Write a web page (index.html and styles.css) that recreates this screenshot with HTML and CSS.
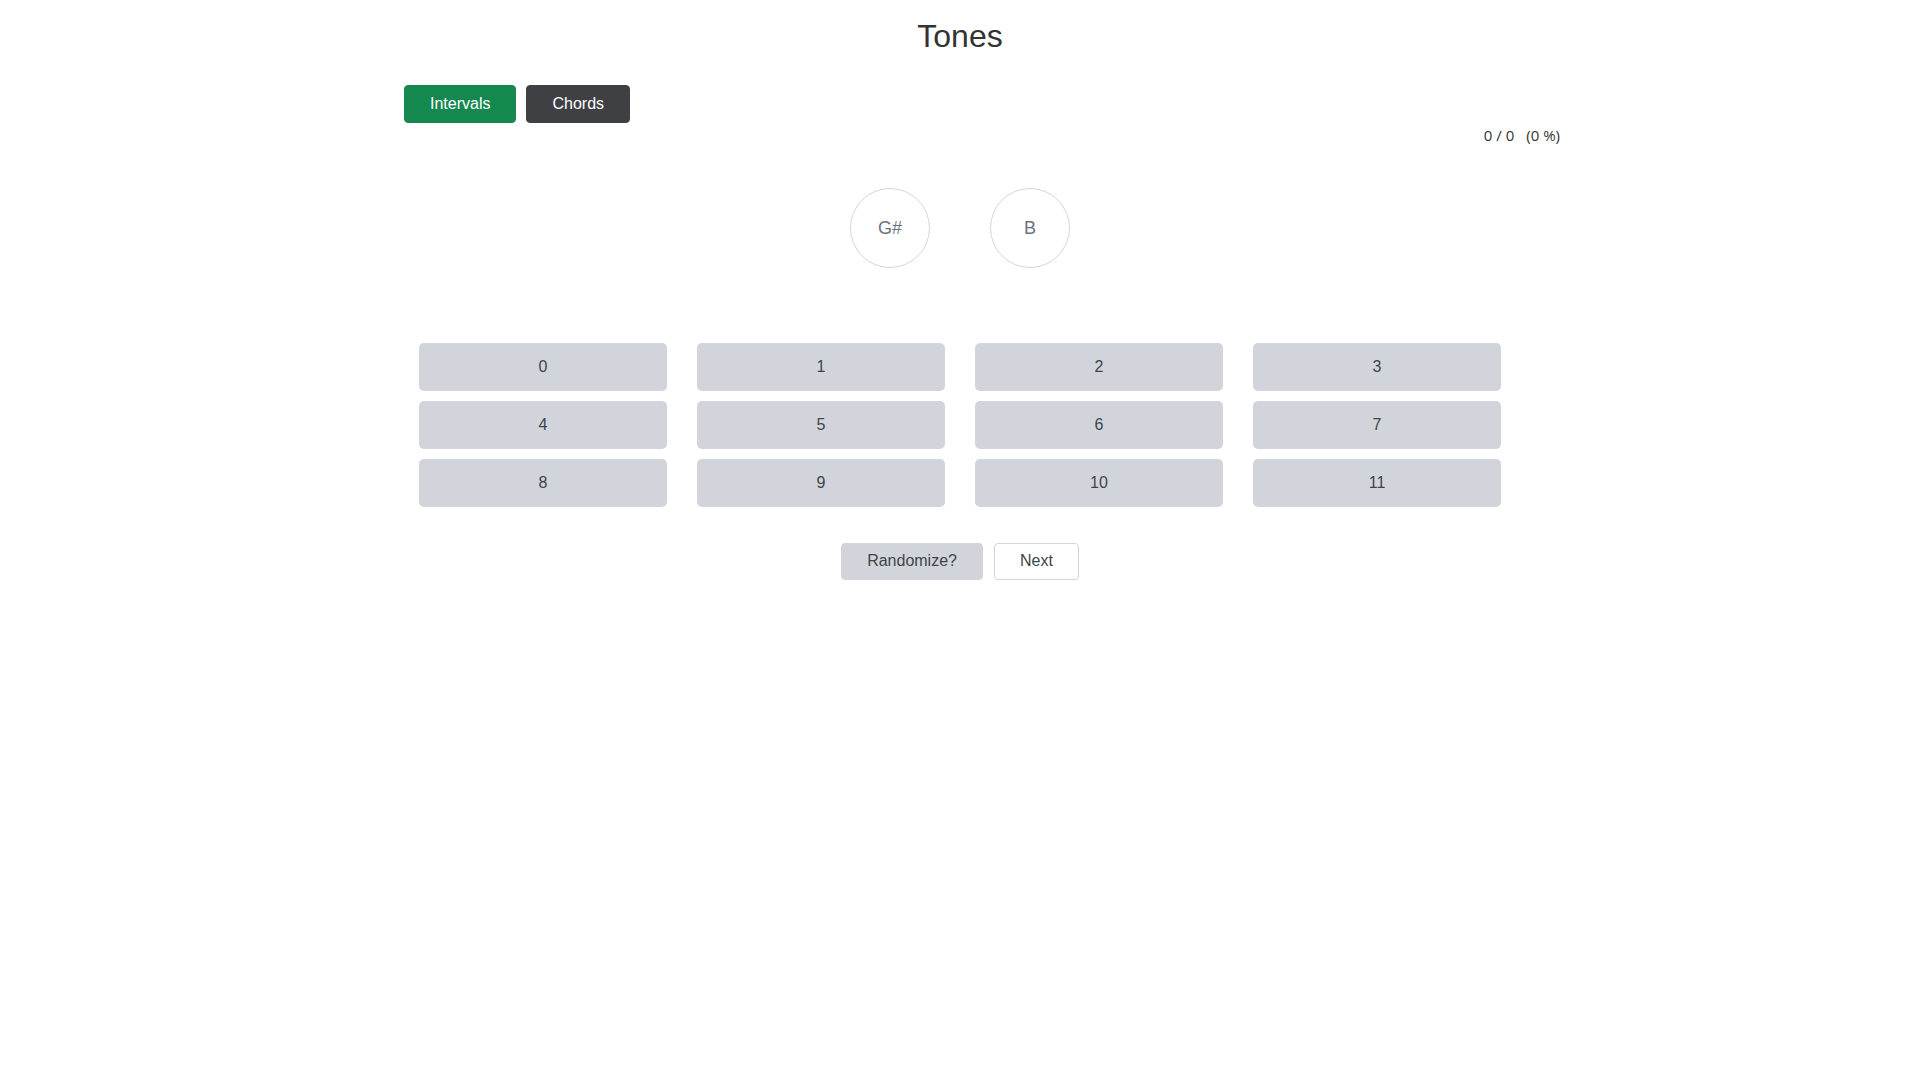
FILE: index.html
```html
<!DOCTYPE html>
<html lang="en">
<head>
<meta charset="utf-8">
<title>Tones</title>
<link rel="stylesheet" href="styles.css">
</head>
<body>
<div class="container">
  <h1 class="title">Tones</h1>
  <div class="mode-row">
    <button class="btn btn-green">Intervals</button>
    <button class="btn btn-dark">Chords</button>
  </div>
  <div class="score">
    <span>0 / 0</span>
    <span>(0 %)</span>
  </div>
  <div class="notes">
    <div class="note">G#</div>
    <div class="note">B</div>
  </div>
  <div class="answers">
    <button class="answer">0</button>
    <button class="answer">1</button>
    <button class="answer">2</button>
    <button class="answer">3</button>
    <button class="answer">4</button>
    <button class="answer">5</button>
    <button class="answer">6</button>
    <button class="answer">7</button>
    <button class="answer">8</button>
    <button class="answer">9</button>
    <button class="answer">10</button>
    <button class="answer">11</button>
  </div>
  <div class="actions">
    <button class="btn btn-gray">Randomize?</button>
    <button class="btn btn-white">Next</button>
  </div>
</div>
</body>
</html>
```

FILE: styles.css
```css
* {
  box-sizing: border-box;
}

html, body {
  margin: 0;
  padding: 0;
  background: #ffffff;
}

body {
  font-family: "Liberation Sans", Arial, sans-serif;
  font-size: 16px;
  color: #333333;
}

.container {
  width: 1200px;
  margin: 0 auto;
}

.title {
  margin: 18px 0 0;
  font-size: 32px;
  line-height: 36px;
  font-weight: 400;
  text-align: center;
  color: #333333;
}

.mode-row {
  display: flex;
  gap: 10px;
  margin-top: 31px;
  padding-left: 44px;
}

.btn {
  font-family: "Liberation Sans", Arial, sans-serif;
  font-size: 16px;
  line-height: 24px;
  padding: 6px 25px;
  border: 1px solid transparent;
  border-radius: 4px;
  cursor: pointer;
  margin: 0;
}

.btn-green {
  background: #15884f;
  border-color: #15884f;
  color: #ffffff;
}

.btn-dark {
  background: #3f4044;
  border-color: #3f4044;
  color: #ffffff;
}

.btn-gray {
  background: #d1d5db;
  border-color: #d1d5db;
  color: #404448;
  padding-top: 5.5px;
  padding-bottom: 5.5px;
}

.btn-white {
  background: #ffffff;
  border-color: #d1d5db;
  color: #404448;
  padding-top: 5.5px;
  padding-bottom: 5.5px;
}

.score {
  display: flex;
  justify-content: flex-end;
  gap: 12px;
  margin-top: 1.5px;
  font-family: "Open Sans", "Noto Sans", sans-serif;
  font-size: 15px;
  line-height: 20px;
  color: #333333;
}

.notes {
  display: flex;
  justify-content: center;
  gap: 60px;
  margin-top: 43px;
}

.note {
  width: 80px;
  height: 80px;
  border: 1px solid #d1d5db;
  border-radius: 50%;
  display: flex;
  align-items: center;
  justify-content: center;
  padding-top: 2px;
  font-size: 18px;
  color: #6b7280;
}

.answers {
  display: grid;
  grid-template-columns: repeat(4, 248px);
  grid-auto-rows: 48px;
  gap: 10px 30px;
  justify-content: center;
  margin-top: 75px;
}

.answer {
  font-family: "Liberation Sans", Arial, sans-serif;
  font-size: 16px;
  background: #d1d5db;
  border: none;
  border-radius: 5px;
  color: #404448;
  margin: 0;
  padding: 0;
  cursor: pointer;
}

.actions {
  display: flex;
  justify-content: center;
  gap: 11px;
  margin-top: 36px;
}
```
